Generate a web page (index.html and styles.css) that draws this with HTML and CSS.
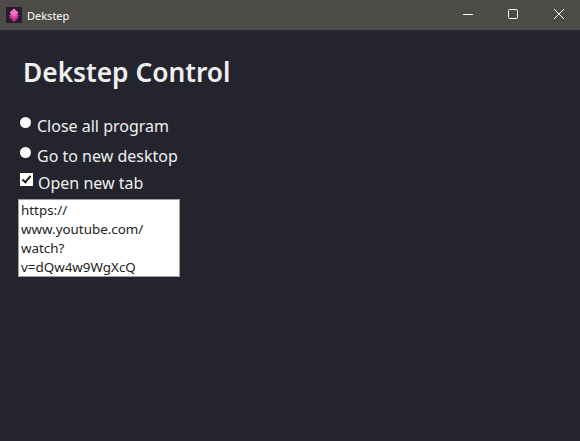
FILE: index.html
```html
<!DOCTYPE html>
<html lang="en">
<head>
    <meta charset="UTF-8">
    <meta name="viewport" content="width=device-width, initial-scale=1.0">
    <title>Dekstep</title>
    <link rel="stylesheet" href="styles.css">
</head>
<body>
    <header class="titlebar">
        <div class="app-name">
            <svg class="app-icon" width="16" height="16" viewBox="0 0 16 16">
                <rect width="16" height="16" fill="#2a1a30"/>
                <path d="M8 7 L13 10.5 L8 15 L3 10.5 Z" fill="#b02a80"/>
                <path d="M8 4.5 L13 8.5 L8 12.5 L3 8.5 Z" fill="#dc3f9e"/>
                <path d="M8 1.5 L12.5 5.5 L8 10 L3.5 5.5 Z" fill="#f070c8"/>
            </svg>
            <span>Dekstep</span>
        </div>
        <div class="window-buttons">
            <svg class="window-button" width="46" height="30" viewBox="0 0 46 30">
                <path d="M21 14.5 H31" stroke="#fff" fill="none"/>
            </svg>
            <svg class="window-button" width="46" height="30" viewBox="0 0 46 30">
                <rect x="20.5" y="9.5" width="9" height="9" rx="1" stroke="#fff" fill="none"/>
            </svg>
            <svg class="window-button" width="46" height="30" viewBox="0 0 46 30">
                <path d="M20 9 L30 19 M30 9 L20 19" stroke="#fff" fill="none"/>
            </svg>
        </div>
    </header>

    <main class="content">
        <h1>Dekstep Control</h1>
        <form class="options">
            <label class="option option-radio">
                <input type="radio" name="action">
                <span>Close all program</span>
            </label>
            <label class="option option-radio">
                <input type="radio" name="action">
                <span>Go to new desktop</span>
            </label>
            <label class="option option-check">
                <input type="checkbox" checked>
                <span>Open new tab</span>
            </label>
            <textarea class="url-box" spellcheck="false">https://
www.youtube.com/
watch?
v=dQw4w9WgXcQ</textarea>
        </form>
    </main>
</body>
</html>
```

FILE: styles.css
```css
html, body {
    height: 100%;
}

body {
    font-family: "Noto Sans", sans-serif;
    background-color: #23242e;
    color: #f0f0f0;
    margin: 0;
    padding: 0;
    overflow: hidden;
}

.titlebar {
    height: 30px;
    background-color: #4c4b48;
    display: flex;
    justify-content: space-between;
    align-items: center;
}

.app-name {
    display: flex;
    align-items: center;
    gap: 5px;
    padding-left: 6px;
    font-size: 11px;
    color: #fff;
}

.window-buttons {
    display: flex;
}

.window-button {
    display: block;
}

.content {
    padding: 0 18px;
}

h1 {
    font-size: 26.3px;
    font-weight: 600;
    line-height: 36px;
    margin: 0;
    padding: 24px 0 0 5px;
}

.options {
    display: flex;
    flex-direction: column;
    align-items: flex-start;
    padding-top: 24px;
}

.option {
    display: flex;
    font-size: 16px;
    line-height: 24px;
}

.option-radio {
    height: 30px;
}

.option-check {
    height: 28px;
    margin-top: -3px;
}

.option input {
    appearance: none;
    margin: 0;
    background-color: #fff;
}

.option-radio input {
    width: 11px;
    height: 11px;
    margin: 3px 6px 0 2px;
    border-radius: 50%;
}

.option-check input {
    position: relative;
    width: 13px;
    height: 13px;
    margin: 2px 5px 0 2px;
}

.option-check input:checked::after {
    content: "";
    position: absolute;
    left: 4px;
    top: 1px;
    width: 3px;
    height: 7px;
    border: solid #222;
    border-width: 0 2px 2px 0;
    transform: rotate(40deg);
}

.url-box {
    box-sizing: border-box;
    width: 162px;
    height: 78px;
    padding: 1px 2px;
    border: 1px solid #a0a0a0;
    border-radius: 0;
    background-color: #fff;
    color: #222;
    font-family: "Noto Sans", sans-serif;
    font-size: 13.4px;
    line-height: 19px;
    white-space: pre;
    resize: none;
    overflow: hidden;
    outline: none;
}
```
